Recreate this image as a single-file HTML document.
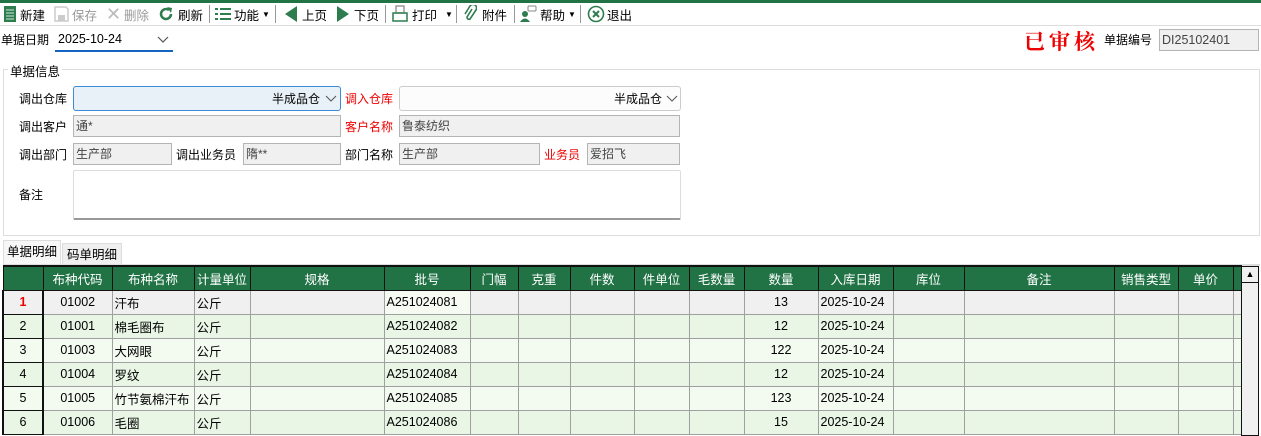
<!DOCTYPE html>
<html><head><meta charset="utf-8"><style>
*{box-sizing:border-box;margin:0;padding:0}
body{width:1261px;height:436px;overflow:hidden;background:#fff;font-family:"Liberation Sans","Noto Sans CJK SC",sans-serif;font-size:12px;color:#000;position:relative}
.a{position:absolute;white-space:nowrap}
.tb{position:absolute;top:3px;height:22px;display:flex;align-items:center;font-size:12.5px}
.sep{position:absolute;top:5px;width:1px;height:18px;background:#999}
.lbl{position:absolute;font-size:12px;line-height:22px}
.red{color:#e00}
.box{position:absolute;height:22px;background:#f0f0f0;border:1px solid #b4b4b4;line-height:20px;padding-left:2px;color:#444}
table{position:absolute;left:2px;top:265px;border-collapse:collapse;table-layout:fixed}
td,th{border:1px solid #a0a0a0;height:24px;padding:0 2px;font-weight:normal;white-space:nowrap;overflow:hidden;font-size:12.5px}
th{background:#217346;color:#fff;border-color:#111;border-top:2px solid #111;text-align:center}
td.h{background:#e9f5e7;border:2px solid #111;border-top-width:1px;border-bottom-width:1px;text-align:center}
tr.r1 td{background:#f0f0f0}
tr.r1 td.b{background:#f5faf3}
tr.ev td{background:#e9f6e6}
tr.od td{background:#f3fbf1}
.c{text-align:center}
</style></head><body>
<div class="a" style="left:0;top:0;width:1261px;height:3px;background:#217346"></div>
<div class="a" style="left:0;top:25px;width:1261px;height:1px;background:#ddd"></div>
<svg class="a" style="left:3px;top:6px" width="14" height="16"><rect x="1" y="0" width="12" height="16" fill="#2e7d4f"/><path d="M3 4h8M3 7h8M3 10h8M3 13h8" stroke="#cfe8d8" stroke-width="1"/></svg>
<div class="tb" style="left:20px">新建</div>
<svg class="a" style="left:53px;top:6px" width="16" height="16"><path d="M2 1h11l2 2v12H2z" fill="none" stroke="#ccc" stroke-width="1.5"/><rect x="5" y="9" width="7" height="6" fill="#ccc"/></svg>
<div class="tb" style="left:72px;color:#999">保存</div>
<div class="tb" style="left:106px;color:#bbb;font-size:18px">✕</div>
<div class="tb" style="left:124px;color:#999">删除</div>
<svg class="a" style="left:158px;top:6px" width="16" height="16"><path d="M13 8a5 5 0 1 1-2-4" fill="none" stroke="#2e7d4f" stroke-width="2.5"/><path d="M9 1l5 1-1 5z" fill="#2e7d4f"/></svg>
<div class="tb" style="left:178px">刷新</div>
<div class="sep" style="left:209px"></div>
<svg class="a" style="left:215px;top:7px" width="16" height="14"><g fill="#2e7d4f"><rect x="0" y="1" width="3" height="2"/><rect x="5" y="1" width="11" height="2"/><rect x="0" y="6" width="3" height="2"/><rect x="5" y="6" width="11" height="2"/><rect x="0" y="11" width="3" height="2"/><rect x="5" y="11" width="11" height="2"/></g></svg>
<div class="tb" style="left:234px">功能 <span style="font-size:8px;margin-left:3px">▼</span></div>
<div class="sep" style="left:275px"></div>
<svg class="a" style="left:284px;top:5px" width="14" height="18"><path d="M13 1v16L1 9z" fill="#2e7d4f"/></svg>
<div class="tb" style="left:302px">上页</div>
<svg class="a" style="left:336px;top:5px" width="14" height="18"><path d="M1 1v16l12-8z" fill="#2e7d4f"/></svg>
<div class="tb" style="left:354px">下页</div>
<div class="sep" style="left:385px"></div>
<svg class="a" style="left:392px;top:5px" width="16" height="18"><rect x="4" y="1" width="8" height="7" fill="none" stroke="#888" stroke-width="1.3"/><rect x="1" y="8" width="14" height="8" fill="none" stroke="#2e7d4f" stroke-width="1.5"/></svg>
<div class="tb" style="left:412px">打印 <span style="font-size:8px;margin-left:8px">▼</span></div>
<div class="sep" style="left:456px"></div>
<svg class="a" style="left:463px;top:5px" width="14" height="18"><path d="M9 4l-5 8a2 2 0 0 0 3 2l6-9a3.5 3.5 0 0 0-6-4L2 9" fill="none" stroke="#2e7d4f" stroke-width="1.6"/></svg>
<div class="tb" style="left:482px">附件</div>
<div class="sep" style="left:514px"></div>
<svg class="a" style="left:519px;top:5px" width="18" height="18"><circle cx="6" cy="9" r="3" fill="#2e7d4f"/><path d="M1 17q5-7 10 0z" fill="#2e7d4f"/><rect x="9" y="1" width="8" height="5" rx="1" fill="none" stroke="#888"/></svg>
<div class="tb" style="left:540px">帮助 <span style="font-size:8px;margin-left:3px">▼</span></div>
<div class="sep" style="left:580px"></div>
<svg class="a" style="left:587px;top:5px" width="18" height="18"><circle cx="9" cy="9" r="7.5" fill="none" stroke="#2e7d4f" stroke-width="1.6"/><path d="M6 6l6 6M12 6l-6 6" stroke="#2e7d4f" stroke-width="2"/></svg>
<div class="tb" style="left:607px">退出</div>
<div class="lbl" style="left:1px;top:29px">单据日期</div>
<div class="a" style="left:55px;top:29px;width:118px;height:23px;border-bottom:2px solid #1565c0;line-height:21px;padding-left:3px;font-size:12.5px">2025-10-24</div>
<svg class="a" style="left:157px;top:36px" width="12" height="8"><path d="M1 1l5 5 5-5" fill="none" stroke="#555" stroke-width="1.2"/></svg>
<div class="a" style="left:1024px;top:28px;color:#e00;font-family:'Noto Serif CJK SC',serif;font-weight:bold;font-size:21px;letter-spacing:4px;line-height:26px">已审核</div>
<div class="lbl" style="left:1104px;top:29px">单据编号</div>
<div class="box" style="left:1159px;top:29px;width:100px;font-size:12.5px">DI25102401</div>
<div class="a" style="left:3px;top:69px;width:1257px;height:167px;border:1px solid #ddd"></div>
<div class="a" style="left:8px;top:61px;background:#fff;padding:0 2px;font-size:12.5px">单据信息</div>
<div class="lbl" style="left:19px;top:88px">调出仓库</div>
<div class="a" style="left:73px;top:86px;width:268px;height:25px;background:#e8f0f8;border:1px solid #3b8ad8;border-radius:3px;text-align:right;padding-right:20px;line-height:24px">半成品仓</div>
<svg class="a" style="left:325px;top:95px" width="12" height="8"><path d="M1 1l5 5 5-5" fill="none" stroke="#555"/></svg>
<div class="lbl red" style="left:345px;top:88px">调入仓库</div>
<div class="a" style="left:399px;top:86px;width:282px;height:25px;background:#fcfcfc;border:1px solid #ccc;border-radius:3px;text-align:right;padding-right:18px;line-height:24px">半成品仓</div>
<svg class="a" style="left:666px;top:95px" width="12" height="8"><path d="M1 1l5 5 5-5" fill="none" stroke="#555"/></svg>
<div class="lbl" style="left:19px;top:116px">调出客户</div>
<div class="box" style="left:73px;top:115px;width:268px">通*</div>
<div class="lbl red" style="left:345px;top:116px">客户名称</div>
<div class="box" style="left:399px;top:115px;width:281px">鲁泰纺织</div>
<div class="lbl" style="left:19px;top:144px">调出部门</div>
<div class="box" style="left:73px;top:143px;width:99px">生产部</div>
<div class="lbl" style="left:176px;top:144px">调出业务员</div>
<div class="box" style="left:243px;top:143px;width:98px">隋**</div>
<div class="lbl" style="left:345px;top:144px">部门名称</div>
<div class="box" style="left:399px;top:143px;width:141px">生产部</div>
<div class="lbl red" style="left:544px;top:144px">业务员</div>
<div class="box" style="left:587px;top:143px;width:93px">爱招飞</div>
<div class="lbl" style="left:19px;top:184px">备注</div>
<div class="a" style="left:73px;top:170px;width:608px;height:50px;border:1px solid #ddd;border-bottom:2px solid #999;border-radius:2px"></div>
<div class="a" style="left:3px;top:240px;width:58px;height:25px;background:#f7f7f7;border:1px solid #ddd;border-bottom:none;line-height:22px;padding-left:3px;font-size:12.5px">单据明细</div>
<div class="a" style="left:62px;top:243px;width:60px;height:22px;background:#efefef;border:1px solid #ddd;border-bottom:none;line-height:22px;padding-left:4px;font-size:12.5px">码单明细</div>
<div class="a" style="left:3px;top:264px;width:1257px;height:2px;background:#ddd"></div>
<table>
<colgroup><col style="width:40px"><col style="width:69px"><col style="width:82px"><col style="width:56px"><col style="width:134px"><col style="width:86px"><col style="width:48px"><col style="width:52px"><col style="width:64px"><col style="width:55px"><col style="width:55px"><col style="width:74px"><col style="width:75px"><col style="width:71px"><col style="width:150px"><col style="width:64px"><col style="width:55px"><col style="width:8px"></colgroup>
<tr><th></th><th>布种代码</th><th>布种名称</th><th>计量单位</th><th>规格</th><th>批号</th><th>门幅</th><th>克重</th><th>件数</th><th>件单位</th><th>毛数量</th><th>数量</th><th>入库日期</th><th>库位</th><th>备注</th><th>销售类型</th><th>单价</th><th></th></tr>
<tr class="r1"><td class="h" style="color:#e00;font-weight:bold">1</td><td class="c">01002</td><td>汗布</td><td>公斤</td><td></td><td class="b">A251024081</td><td></td><td></td><td></td><td></td><td></td><td class="c">13</td><td>2025-10-24</td><td></td><td></td><td></td><td></td><td></td></tr>
<tr class="ev"><td class="h">2</td><td class="c">01001</td><td>棉毛圈布</td><td>公斤</td><td></td><td>A251024082</td><td></td><td></td><td></td><td></td><td></td><td class="c">12</td><td>2025-10-24</td><td></td><td></td><td></td><td></td><td></td></tr>
<tr class="od"><td class="h">3</td><td class="c">01003</td><td>大网眼</td><td>公斤</td><td></td><td>A251024083</td><td></td><td></td><td></td><td></td><td></td><td class="c">122</td><td>2025-10-24</td><td></td><td></td><td></td><td></td><td></td></tr>
<tr class="ev"><td class="h">4</td><td class="c">01004</td><td>罗纹</td><td>公斤</td><td></td><td>A251024084</td><td></td><td></td><td></td><td></td><td></td><td class="c">12</td><td>2025-10-24</td><td></td><td></td><td></td><td></td><td></td></tr>
<tr class="od"><td class="h">5</td><td class="c">01005</td><td>竹节氨棉汗布</td><td>公斤</td><td></td><td>A251024085</td><td></td><td></td><td></td><td></td><td></td><td class="c">123</td><td>2025-10-24</td><td></td><td></td><td></td><td></td><td></td></tr>
<tr class="ev"><td class="h">6</td><td class="c">01006</td><td>毛圈</td><td>公斤</td><td></td><td>A251024086</td><td></td><td></td><td></td><td></td><td></td><td class="c">15</td><td>2025-10-24</td><td></td><td></td><td></td><td></td><td></td></tr>
</table>
<div class="a" style="left:1241px;top:266px;width:18px;height:170px;background:#f0f0f0;border:1px solid #111"></div>
<div class="a" style="left:1241px;top:266px;width:18px;height:17px;border:1px solid #111;background:#f0f0f0;font-size:9px;text-align:center;line-height:14px">▲</div>
</body></html>
